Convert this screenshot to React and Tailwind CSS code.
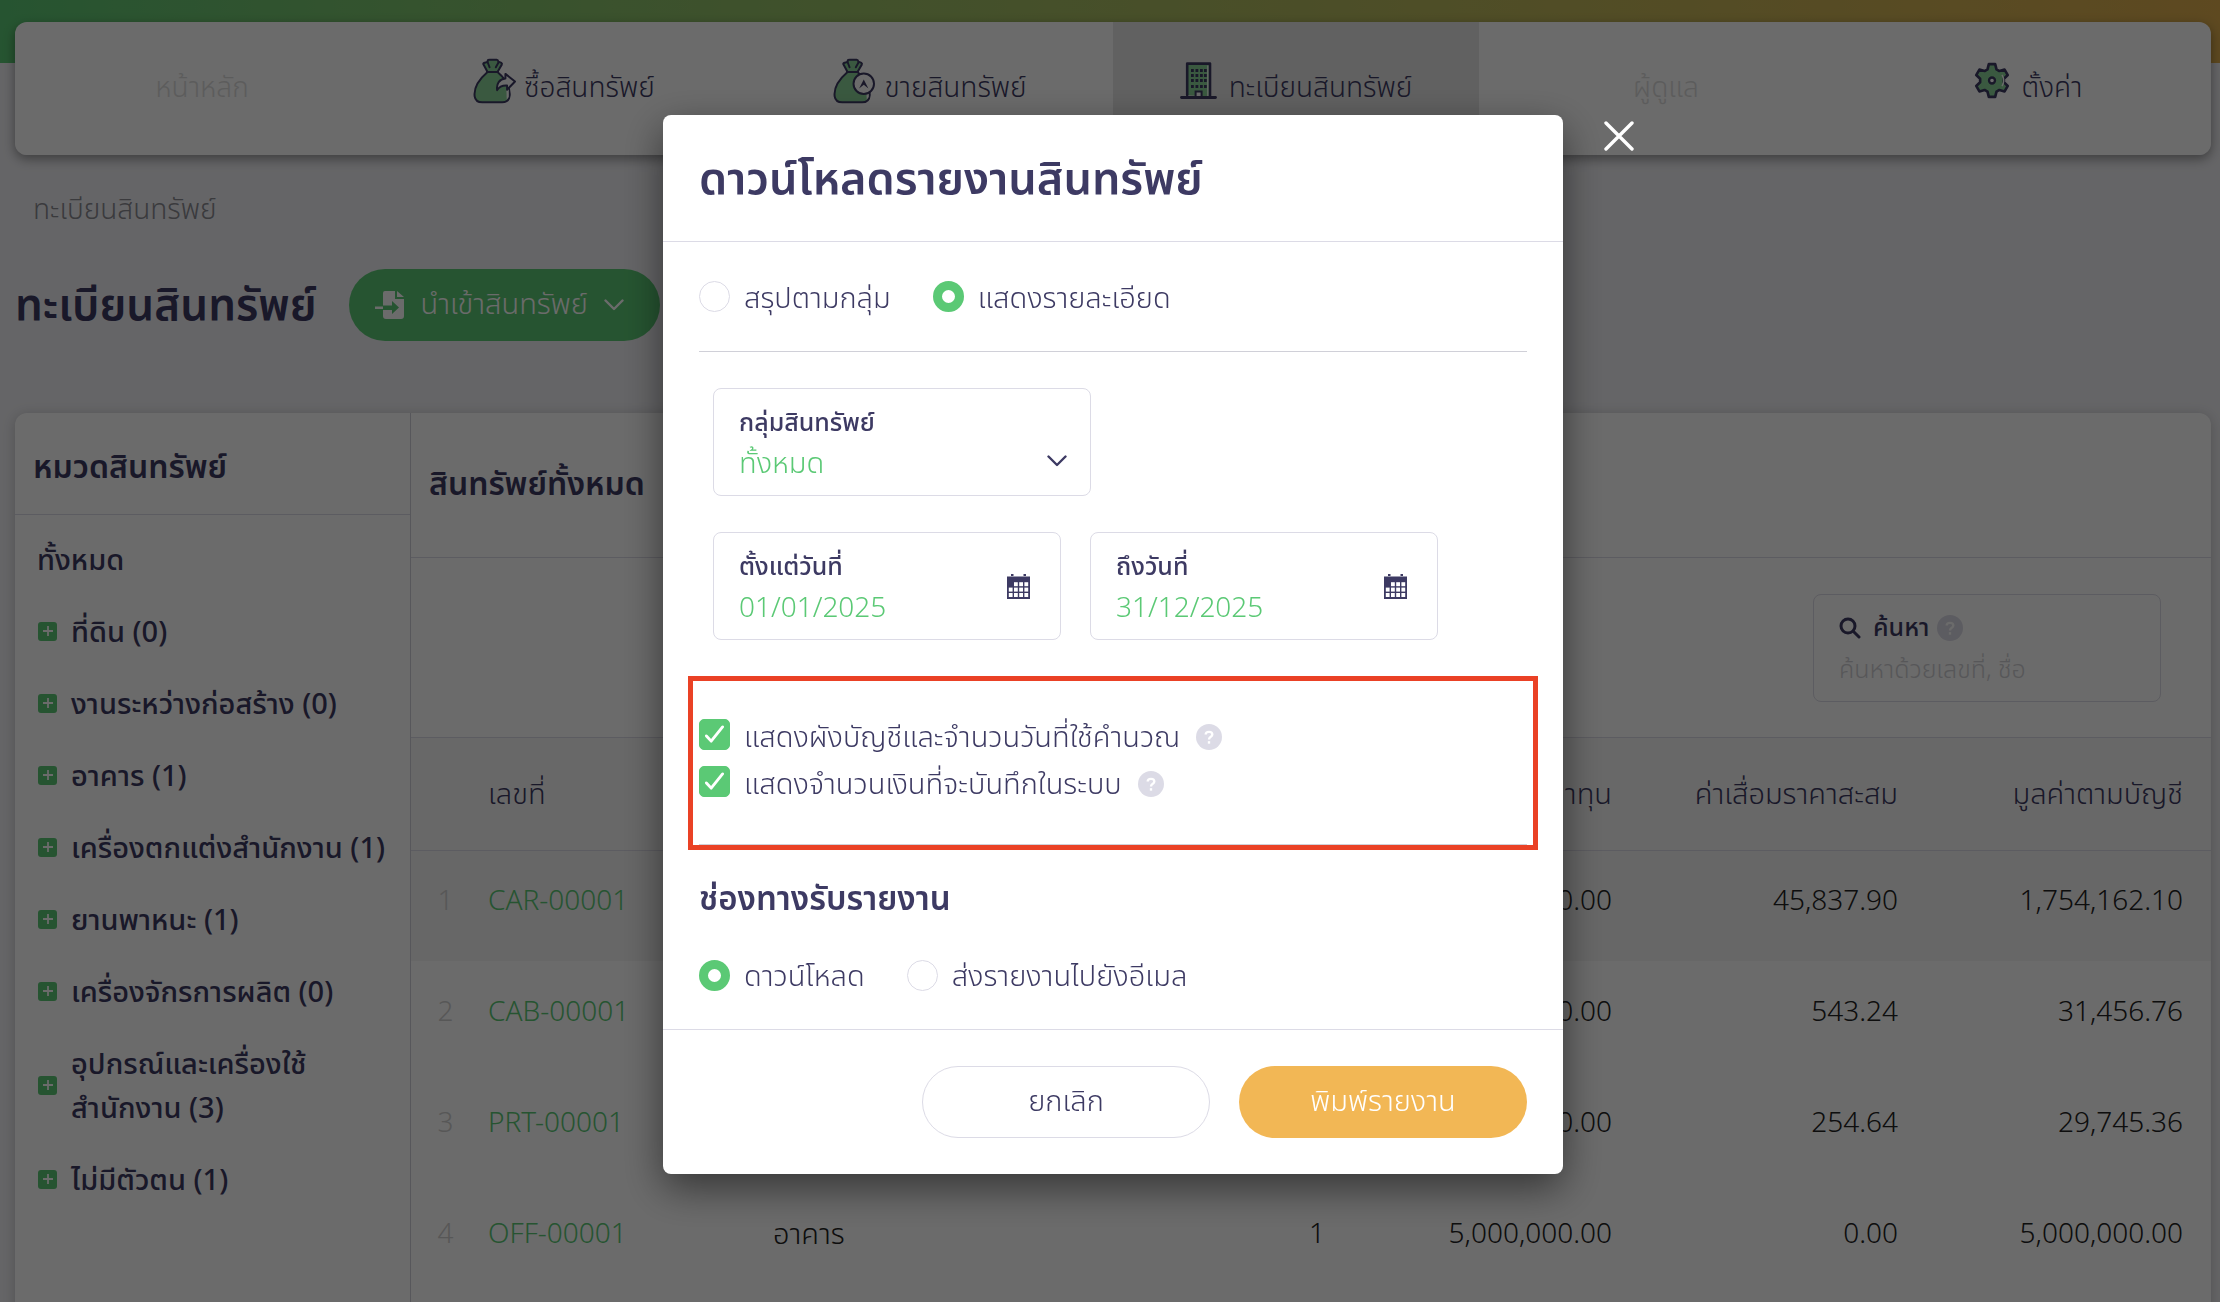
import { useState } from "react";

const INK = "#3d3a63";
const LEAF = "#8ad498";

function BagShape() {
  return (
    <>
      <path d="M44 42 C16 66 2 92 5 116 C7 130 16 134 28 134 L88 134 C102 134 110 126 111 112 C112 88 98 62 74 42 Z" fill={LEAF} stroke={INK} strokeWidth="6" strokeLinejoin="round" />
      <path d="M100 66 L102 126 L108 118 L108 96 Z" fill="#fff" />
      <path d="M44 42 L31 18 C30 14 40 14 44 12 C44 4 48 5 52 5 L72 5 C76 5 76 8 77 12 C82 13 90 14 87 20 L74 42 Z" fill={LEAF} stroke={INK} strokeWidth="6" strokeLinejoin="round" />
      <path d="M44 12 L50 28 M78 12 L69 28 M42 42 L76 42" stroke={INK} strokeWidth="6" strokeLinecap="round" fill="none" />
    </>
  );
}

function BuyIcon() {
  return (
    <svg viewBox="0 0 130 139" className="h-[46px] w-[43px]" aria-hidden="true">
      <BagShape />
      <path d="M98 48 L127 71 L103 96 L103 83 C88 82 79 87 73 97 C70 78 80 63 98 62 Z" fill="#fff" stroke={INK} strokeWidth="6" strokeLinejoin="round" />
    </svg>
  );
}

function SellIcon() {
  return (
    <svg viewBox="0 0 130 139" className="h-[46px] w-[43px]" aria-hidden="true">
      <BagShape />
      <circle cx="93" cy="78" r="31" fill="#fff" stroke={INK} strokeWidth="6" />
      <path d="M79 92 L93 65 L107 92 L93 81 Z" fill={INK} />
    </svg>
  );
}

function BuildingIcon() {
  return (
    <svg viewBox="0 0 37 37" className="size-[37px]" aria-hidden="true">
      <path d="M7.2 33 V1.6 H30 V35" fill={LEAF} stroke={INK} strokeWidth="2.6" strokeLinejoin="round" strokeLinecap="round" />
      <path d="M27.8 3.5 V34" stroke="#fff" strokeWidth="1.2" />
      {[7, 12, 17, 23].map((y) => [11, 15.5, 20, 24].map((x) => <rect key={x + "-" + y} x={x} y={y} width="2.8" height="3" fill={INK} />))}
      <rect x="15.6" y="29.5" width="6" height="6" fill="#fff" stroke={INK} strokeWidth="2" />
      <path d="M1.5 35.5 H35.5" stroke={INK} strokeWidth="2.8" strokeLinecap="round" />
    </svg>
  );
}

const gearPoints = [0, 60, 120, 180, 240, 300]
  .flatMap((a) => [[a - 22, 36], [a - 11, 50], [a + 11, 50], [a + 22, 36]])
  .map(([a, r]) => {
    const t = (a * Math.PI) / 180;
    return (54 + r * Math.sin(t)).toFixed(1) + "," + (55 - r * Math.cos(t)).toFixed(1);
  })
  .join(" ");

function GearIcon() {
  return (
    <svg viewBox="0 0 108 110" className="h-[37px] w-[36px]" aria-hidden="true">
      <polygon points={gearPoints} fill={LEAF} stroke={INK} strokeWidth="8" strokeLinejoin="round" />
      <path d="M84 38 C90 48 90 62 84 72" stroke="#fff" strokeWidth="4" fill="none" />
      <circle cx="54" cy="55" r="9" fill="#fff" stroke={INK} strokeWidth="7" />
    </svg>
  );
}

function Chevron({ className }) {
  return (
    <svg viewBox="0 0 20 12" fill="none" stroke="currentColor" strokeWidth="2.4" strokeLinecap="round" strokeLinejoin="round" className={className} aria-hidden="true">
      <path d="M1.5 1.5 L10 10 L18.5 1.5" />
    </svg>
  );
}

function HelpDot() {
  return (
    <button type="button" aria-label="?" className="flex size-[26px] shrink-0 items-center justify-center rounded-full bg-[#dcdbe6]">
      <svg viewBox="0 0 12 16" className="h-[14px] w-[10px]" fill="none" stroke="#fff" strokeWidth="2.8" aria-hidden="true">
        <path d="M2 5 C2 0.8 10 0.8 10 5 C10 8 6 7.6 6 11" />
        <path d="M6 13 V16" />
      </svg>
    </button>
  );
}

function CalendarIcon() {
  return (
    <svg viewBox="0 0 23 25" className="h-[25px] w-[23px] shrink-0" fill={INK} aria-hidden="true">
      <path d="M4 0 H6.5 V2 H4 Z M16.5 0 H19 V2 H16.5 Z M0 2.5 H23 V25 H0 Z" />
      <g fill="#fff">
        {[8.2, 13.6, 19].map((y, r) => [1.8, 7, 12.2, 17.4].map((x, c) => (r === 0 && c === 0 ? null : <rect key={x + "-" + y} x={x} y={y} width="3.8" height="4" />)))}
      </g>
    </svg>
  );
}

const nav = [
  { label: "หน้าหลัก", muted: true },
  { label: "ซื้อสินทรัพย์", Icon: BuyIcon, gap: "gap-2" },
  { label: "ขายสินทรัพย์", Icon: SellIcon, gap: "gap-2" },
  { label: "ทะเบียนสินทรัพย์", Icon: BuildingIcon, gap: "gap-3", active: true },
  { label: "ผู้ดูแล", muted: true },
  { label: "ตั้งค่า", Icon: GearIcon, gap: "gap-3" },
];

const groups = [
  "ที่ดิน (0)",
  "งานระหว่างก่อสร้าง (0)",
  "อาคาร (1)",
  "เครื่องตกแต่งสำนักงาน (1)",
  "ยานพาหนะ (1)",
  "เครื่องจักรการผลิต (0)",
  "อุปกรณ์และเครื่องใช้สำนักงาน (3)",
  "ไม่มีตัวตน (1)",
];

const assets = [
  { id: "CAR-00001", cost: "1,800,000.00", dep: "45,837.90", book: "1,754,162.10" },
  { id: "CAB-00001", cost: "32,000.00", dep: "543.24", book: "31,456.76" },
  { id: "PRT-00001", cost: "30,000.00", dep: "254.64", book: "29,745.36" },
  { id: "OFF-00001", type: "อาคาร", count: "1", cost: "5,000,000.00", dep: "0.00", book: "5,000,000.00" },
];

function NavBar() {
  return (
    <nav className="grid h-[133px] grid-cols-6 overflow-hidden rounded-xl bg-white">
      {nav.map(({ label, Icon, gap, active, muted }) => (
        <a key={label} href="#" className={`flex items-center justify-center ${gap || ""} ${active ? "bg-[#e6e6e6]" : ""} ${muted ? "pl-2 text-[#dcdcdc]" : "text-[#3d3a63]"}`}>
          {Icon && <span className="pb-4"><Icon /></span>}
          <span>{label}</span>
        </a>
      ))}
    </nav>
  );
}

function Sidebar() {
  return (
    <aside className="w-[396px] shrink-0 border-r border-[#d0cfd8]">
      <h2 className="flex h-[102px] items-center border-b border-[#dcdbe6] px-[18px] pt-2 text-[32px] font-semibold">หมวดสินทรัพย์</h2>
      <ul className="pt-[10px] text-[29px] font-medium">
        <li className="flex h-[72px] items-center pl-[22px]"><a href="#">ทั้งหมด</a></li>
        {groups.map((g) => (
          <li key={g} className="flex items-center gap-[14px] py-[14px] pr-2 pl-[23px]">
            <button type="button" aria-label={g} className="mb-1 flex size-[19px] shrink-0 items-center justify-center rounded-[3px] bg-[#5bc975]">
              <svg viewBox="0 0 10 10" className="size-[10px]" stroke="#fff" strokeWidth="1.8" aria-hidden="true"><path d="M5 0 V10 M0 5 H10" /></svg>
            </button>
            <a href="#" className="max-w-[330px] leading-[44px]">{g}</a>
          </li>
        ))}
      </ul>
    </aside>
  );
}

function AssetTable() {
  return (
    <table className="w-full table-fixed text-[#222]">
      <colgroup>
        <col className="w-[49px]" />
        <col className="w-[285px]" />
        <col />
        <col className="w-[200px]" />
        <col className="w-[287px]" />
        <col className="w-[286px]" />
        <col className="w-[285px]" />
      </colgroup>
      <thead>
        <tr className="h-[112px] border-b border-[#dcdbe6] bg-[#f7f7f7] text-[29px] text-[#3d3a63]">
          <th />
          <th className="px-7 pt-[2px] text-left font-[350]">เลขที่</th>
          <th />
          <th />
          <th className="px-7 pt-[2px] text-right font-[350]">ราคาทุน</th>
          <th className="px-7 pt-[2px] text-right font-[350]">ค่าเสื่อมราคาสะสม</th>
          <th className="px-7 pt-[2px] text-right font-[350]">มูลค่าตามบัญชี</th>
        </tr>
      </thead>
      <tbody>
        {assets.map((a, i) => (
          <tr key={a.id} className="h-[111px] first:bg-[#f5f5f5]">
            <td className="pb-2 pl-5 text-center text-[#d0d0d0]">{i + 1}</td>
            <td className="px-7 pb-2 text-[#5bc975]"><a href="#">{a.id}</a></td>
            <td className="px-7 pb-2 text-[29px]">{a.type}</td>
            <td className="px-7 pb-2 text-right">{a.count}</td>
            <td className="px-7 pb-2 text-right">{a.cost}</td>
            <td className="px-7 pb-2 text-right">{a.dep}</td>
            <td className="px-7 pb-2 text-right">{a.book}</td>
          </tr>
        ))}
      </tbody>
    </table>
  );
}

function Page() {
  return (
    <div className="h-screen overflow-hidden bg-[#f1f1f5]">
      <div className="h-[63px] bg-linear-to-r from-[#5bc975] to-[#dfae4e]" />
      <div className="-mt-[41px] pr-[9px] pl-[15px]">
        <div className="rounded-xl shadow-[0_4px_12px_rgba(0,0,0,0.4)]"><NavBar /></div>
        <p className="mt-9 flex h-10 items-center pl-[18px] text-[#8a8a92]">ทะเบียนสินทรัพย์</p>
        <div className="mt-[38px] flex items-center gap-8">
          <h1 className="pt-1 text-[44px] leading-[68px] font-semibold">ทะเบียนสินทรัพย์</h1>
          <button type="button" className="flex h-[72px] items-center gap-4 rounded-full bg-[#5bc975] pr-9 pl-[26px] text-[29px] text-white">
            <svg viewBox="0 0 30 30" className="size-[30px]" aria-hidden="true">
              <path d="M10 1 H20 V9 H29 V26 Q29 29 26 29 H11 Q8 29 8 26 V20 H17 V24 L24 17.500 L17 11 V15.500 H8 V3 Q8 1 10 1 Z M22 1 L29 7 H22 Z M0 16.500 H8 V19 H0 Z" fill="#fff" />
            </svg>
            <span>นำเข้าสินทรัพย์</span>
            <Chevron className="h-[12px] w-[20px]" />
          </button>
        </div>
        <div className="mt-[72px] flex min-h-[1000px] rounded-xl bg-white shadow-[0_2px_14px_rgba(0,0,0,0.2)]">
          <Sidebar />
          <section className="min-w-0 grow">
            <h2 className="flex h-[145px] items-center border-b border-[#dcdbe6] px-[18px] text-[32px] font-semibold">สินทรัพย์ทั้งหมด</h2>
            <div className="flex h-[180px] items-center justify-end border-b border-[#dcdbe6] pr-[50px]">
              <div className="h-[108px] w-[348px] rounded-lg border border-[#dcdbe6] px-[25px] pt-3">
                <div className="flex items-center gap-2">
                  <svg viewBox="0 0 22 22" className="mr-1 size-[22px]" fill="none" stroke="currentColor" strokeWidth="3" strokeLinecap="round" aria-hidden="true">
                    <circle cx="9" cy="9" r="7" />
                    <path d="M14.500 14.500 L20 20" />
                  </svg>
                  <label htmlFor="search" className="text-[25px] leading-[42px] font-medium">ค้นหา</label>
                  <HelpDot />
                </div>
                <input id="search" placeholder="ค้นหาด้วยเลขที่, ชื่อ" className="h-[42px] w-full bg-transparent text-[25px] outline-none placeholder:text-[#cfcfd4]" />
              </div>
            </div>
            <AssetTable />
          </section>
        </div>
      </div>
    </div>
  );
}

function Radio({ name, label, defaultChecked }) {
  return (
    <label className="flex items-center gap-[14px] text-[29px]">
      <input type="radio" name={name} defaultChecked={defaultChecked} className="size-[31px] shrink-0 appearance-none rounded-full border border-[#dcdbe6] bg-white checked:border-[9px] checked:border-[#5bc975]" />
      <span className="pt-1">{label}</span>
    </label>
  );
}

function Check({ id, label }) {
  return (
    <div className="flex h-[47px] items-center">
      <span className="relative mr-[14px] mb-1 flex size-[31px] shrink-0">
        <input id={id} type="checkbox" defaultChecked className="peer size-[31px] appearance-none rounded-[5px] border border-[#dcdbe6] bg-white checked:border-[#5bc975] checked:bg-[#5bc975]" />
        <svg viewBox="0 0 20 20" className="pointer-events-none absolute inset-[6px] size-[19px] opacity-0 peer-checked:opacity-100" fill="none" stroke="#fff" strokeWidth="3" strokeLinecap="round" strokeLinejoin="round" aria-hidden="true">
          <path d="M1.500 11.500 L6.500 17 L18.500 2" />
        </svg>
      </span>
      <label htmlFor={id} className="mr-4 pt-[2px] text-[29px]">{label}</label>
      <HelpDot />
    </div>
  );
}

function DateField({ id, label, value }) {
  return (
    <div className="flex h-[108px] w-[348px] items-center rounded-lg border border-[#dcdbe6] pr-[30px] pl-[25px]">
      <div className="min-w-0 grow pt-1">
        <label htmlFor={id} className="block text-[25px] leading-[42px] font-medium">{label}</label>
        <input id={id} type="text" defaultValue={value} className="block h-[42px] w-full bg-transparent text-[#5bc975] outline-none" />
      </div>
      <CalendarIcon />
    </div>
  );
}

function Dialog({ onClose }) {
  return (
    <div className="fixed inset-0 flex items-start justify-center bg-black/58 pt-[115px] pl-[6px]">
      <div role="dialog" aria-labelledby="dialog-title" className="relative w-[900px] rounded-lg bg-white shadow-[0_14px_40px_rgba(0,0,0,0.5)]">
        <button type="button" aria-label="Close" onClick={onClose} className="absolute top-[6px] left-full ml-[41px] p-0 text-white">
          <svg viewBox="0 0 30 30" className="size-[30px]" stroke="currentColor" strokeWidth="3.4" strokeLinecap="round" aria-hidden="true"><path d="M2 2 L28 28 M28 2 L2 28" /></svg>
        </button>
        <h2 id="dialog-title" className="flex h-[127px] items-center border-b border-[#dcdbe6] px-9 pt-1 text-[45px] font-semibold">ดาวน์โหลดรายงานสินทรัพย์</h2>
        <div className="px-9">
          <div className="flex h-[110px] items-center gap-[42px] border-b border-[#d0d0d8]">
            <Radio name="mode" label="สรุปตามกลุ่ม" />
            <Radio name="mode" label="แสดงรายละเอียด" defaultChecked />
          </div>
          <div className="flex flex-col gap-9 px-[14px] py-9">
            <div className="relative h-[108px] w-[378px] rounded-lg border border-[#dcdbe6] px-[25px] pt-[14px]">
              <label htmlFor="group" className="block text-[25px] leading-[40px] font-medium">กลุ่มสินทรัพย์</label>
              <select id="group" className="block h-[42px] w-full appearance-none bg-transparent text-[29px] text-[#5bc975] outline-none">
                <option>ทั้งหมด</option>
              </select>
              <Chevron className="pointer-events-none absolute right-[23px] bottom-[28px] h-[12px] w-[20px]" />
            </div>
            <div className="flex gap-[29px]">
              <DateField id="from" label="ตั้งแต่วันที่" value="01/01/2025" />
              <DateField id="to" label="ถึงวันที่" value="31/12/2025" />
            </div>
          </div>
          <div className="-mx-[11px] border-[5px] border-[#ea4125] px-[6px]">
            <div className="border-b border-[#d0d0d8] pt-8 pb-[37px]">
              <Check id="chart" label="แสดงผังบัญชีและจำนวนวันที่ใช้คำนวณ" />
              <Check id="amount" label="แสดงจำนวนเงินที่จะบันทึกในระบบ" />
            </div>
          </div>
          <h3 className="mt-[29px] text-[33px] leading-[42px] font-semibold">ช่องทางรับรายงาน</h3>
          <div className="flex h-[108px] items-center gap-[42px]">
            <Radio name="channel" label="ดาวน์โหลด" defaultChecked />
            <Radio name="channel" label="ส่งรายงานไปยังอีเมล" />
          </div>
        </div>
        <div className="flex justify-end gap-[29px] border-t border-[#dcdbe6] p-9 text-[29px]">
          <button type="button" onClick={onClose} className="h-[72px] w-[288px] rounded-full border border-[#dcdbe6]">ยกเลิก</button>
          <button type="button" className="h-[72px] w-[288px] rounded-full bg-[#f2b755] text-white">พิมพ์รายงาน</button>
        </div>
      </div>
    </div>
  );
}

export default function App() {
  const [open, setOpen] = useState(true);
  return (
    <div className="font-['Noto_Sans_Thai','Noto_Sans',sans-serif] text-[28px] leading-[42px] font-[350] text-[#3d3a63]">
      <Page />
      {open && <Dialog onClose={() => setOpen(false)} />}
    </div>
  );
}
